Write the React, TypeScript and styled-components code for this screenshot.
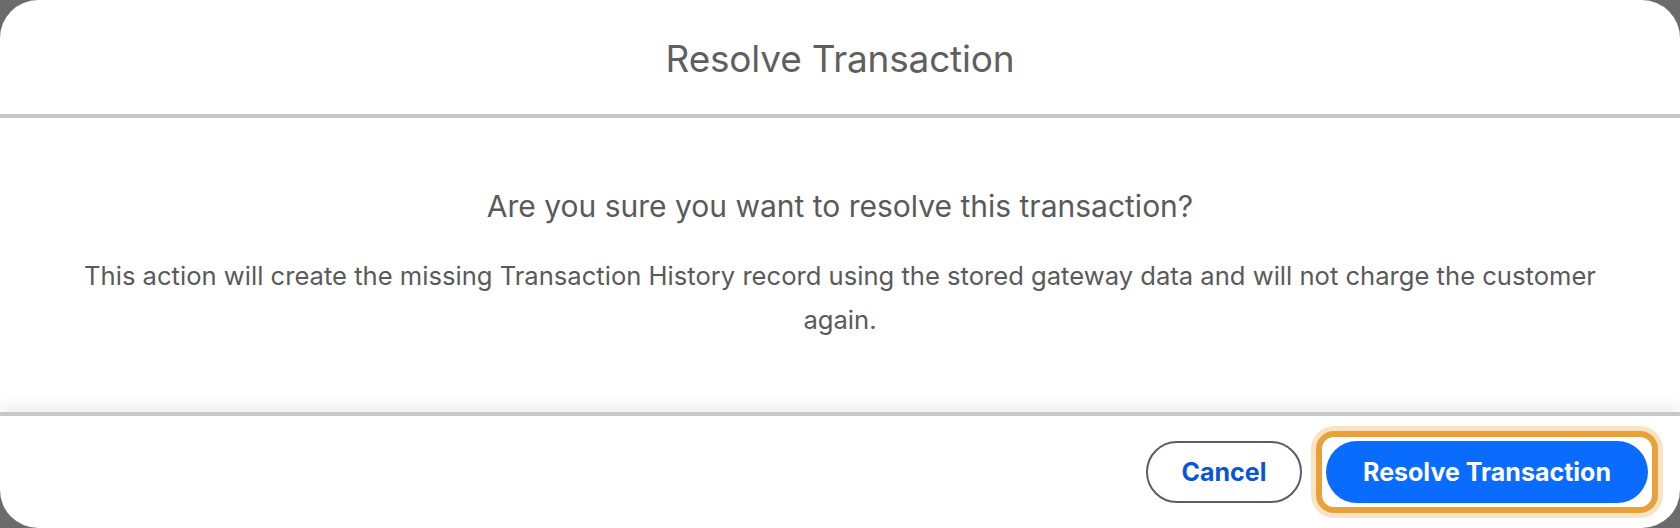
import React from "react";
import styled, { createGlobalStyle } from "styled-components";

const GlobalStyle = createGlobalStyle`
  html, body {
    margin: 0;
    padding: 0;
    background: #6b6b6b;
  }
  body {
    font-family: Inter, "Noto Sans", "Liberation Sans", sans-serif;
    -webkit-font-smoothing: antialiased;
  }
`;

const Modal = styled.div`
  width: 1680px;
  height: 528px;
  background: #ffffff;
  border-radius: 38px;
  overflow: hidden;
  display: flex;
  flex-direction: column;
`;

const Header = styled.header`
  height: 114px;
  border-bottom: 4px solid #c8c8c8;
  display: flex;
  align-items: center;
  justify-content: center;
`;

const Title = styled.h1`
  margin: 0;
  padding-top: 2px;
  font-size: 37px;
  font-weight: 400;
  color: #5f5f5f;
  letter-spacing: -0.2px;
`;

const Body = styled.section`
  flex: 1;
  display: flex;
  flex-direction: column;
  align-items: center;
  padding: 70px 40px 0;
  text-align: center;
`;

const Question = styled.h2`
  margin: 0 0 30px;
  font-size: 30px;
  line-height: 36px;
  font-weight: 400;
  color: #5a5a5a;
`;

const Message = styled.p`
  margin: 0;
  max-width: 1560px;
  font-size: 25.6px;
  line-height: 44px;
  color: #5a5a5a;
`;

const Footer = styled.footer`
  height: 112px;
  border-top: 4px solid #c8c8c8;
  box-shadow: 0 -6px 14px rgba(0, 0, 0, 0.07);
  display: flex;
  align-items: center;
  justify-content: flex-end;
  gap: 14px;
  padding: 0 22px;
`;

const FocusRing = styled.span`
  display: inline-flex;
  padding: 4px;
  border: 6px solid #e9a23b;
  border-radius: 18px;
  box-shadow: 0 0 0 5px #f8e3c4;
  background: #ffffff;
`;

const Button = styled.button<{ $primary?: boolean }>`
  height: 62px;
  padding: 0 30px;
  border-radius: 31px;
  font-family: inherit;
  font-size: 25px;
  font-weight: 700;
  cursor: pointer;
  border: ${(p) => (p.$primary ? "none" : "2px solid #5e5e5e")};
  background: ${(p) => (p.$primary ? "#0a6cff" : "#ffffff")};
  color: ${(p) => (p.$primary ? "#ffffff" : "#0b55d4")};
  min-width: ${(p) => (p.$primary ? "322px" : "156px")};
`;

const App = () => {
  return (
    <>
      <GlobalStyle />
      <Modal>
        <Header>
          <Title>Resolve Transaction</Title>
        </Header>
        <Body>
          <Question>Are you sure you want to resolve this transaction?</Question>
          <Message>
            This action will create the missing Transaction History record using the
            stored gateway data and will not charge the customer again.
          </Message>
        </Body>
        <Footer>
          <Button>Cancel</Button>
          <FocusRing>
            <Button $primary>Resolve Transaction</Button>
          </FocusRing>
        </Footer>
      </Modal>
    </>
  );
};

export default App;
